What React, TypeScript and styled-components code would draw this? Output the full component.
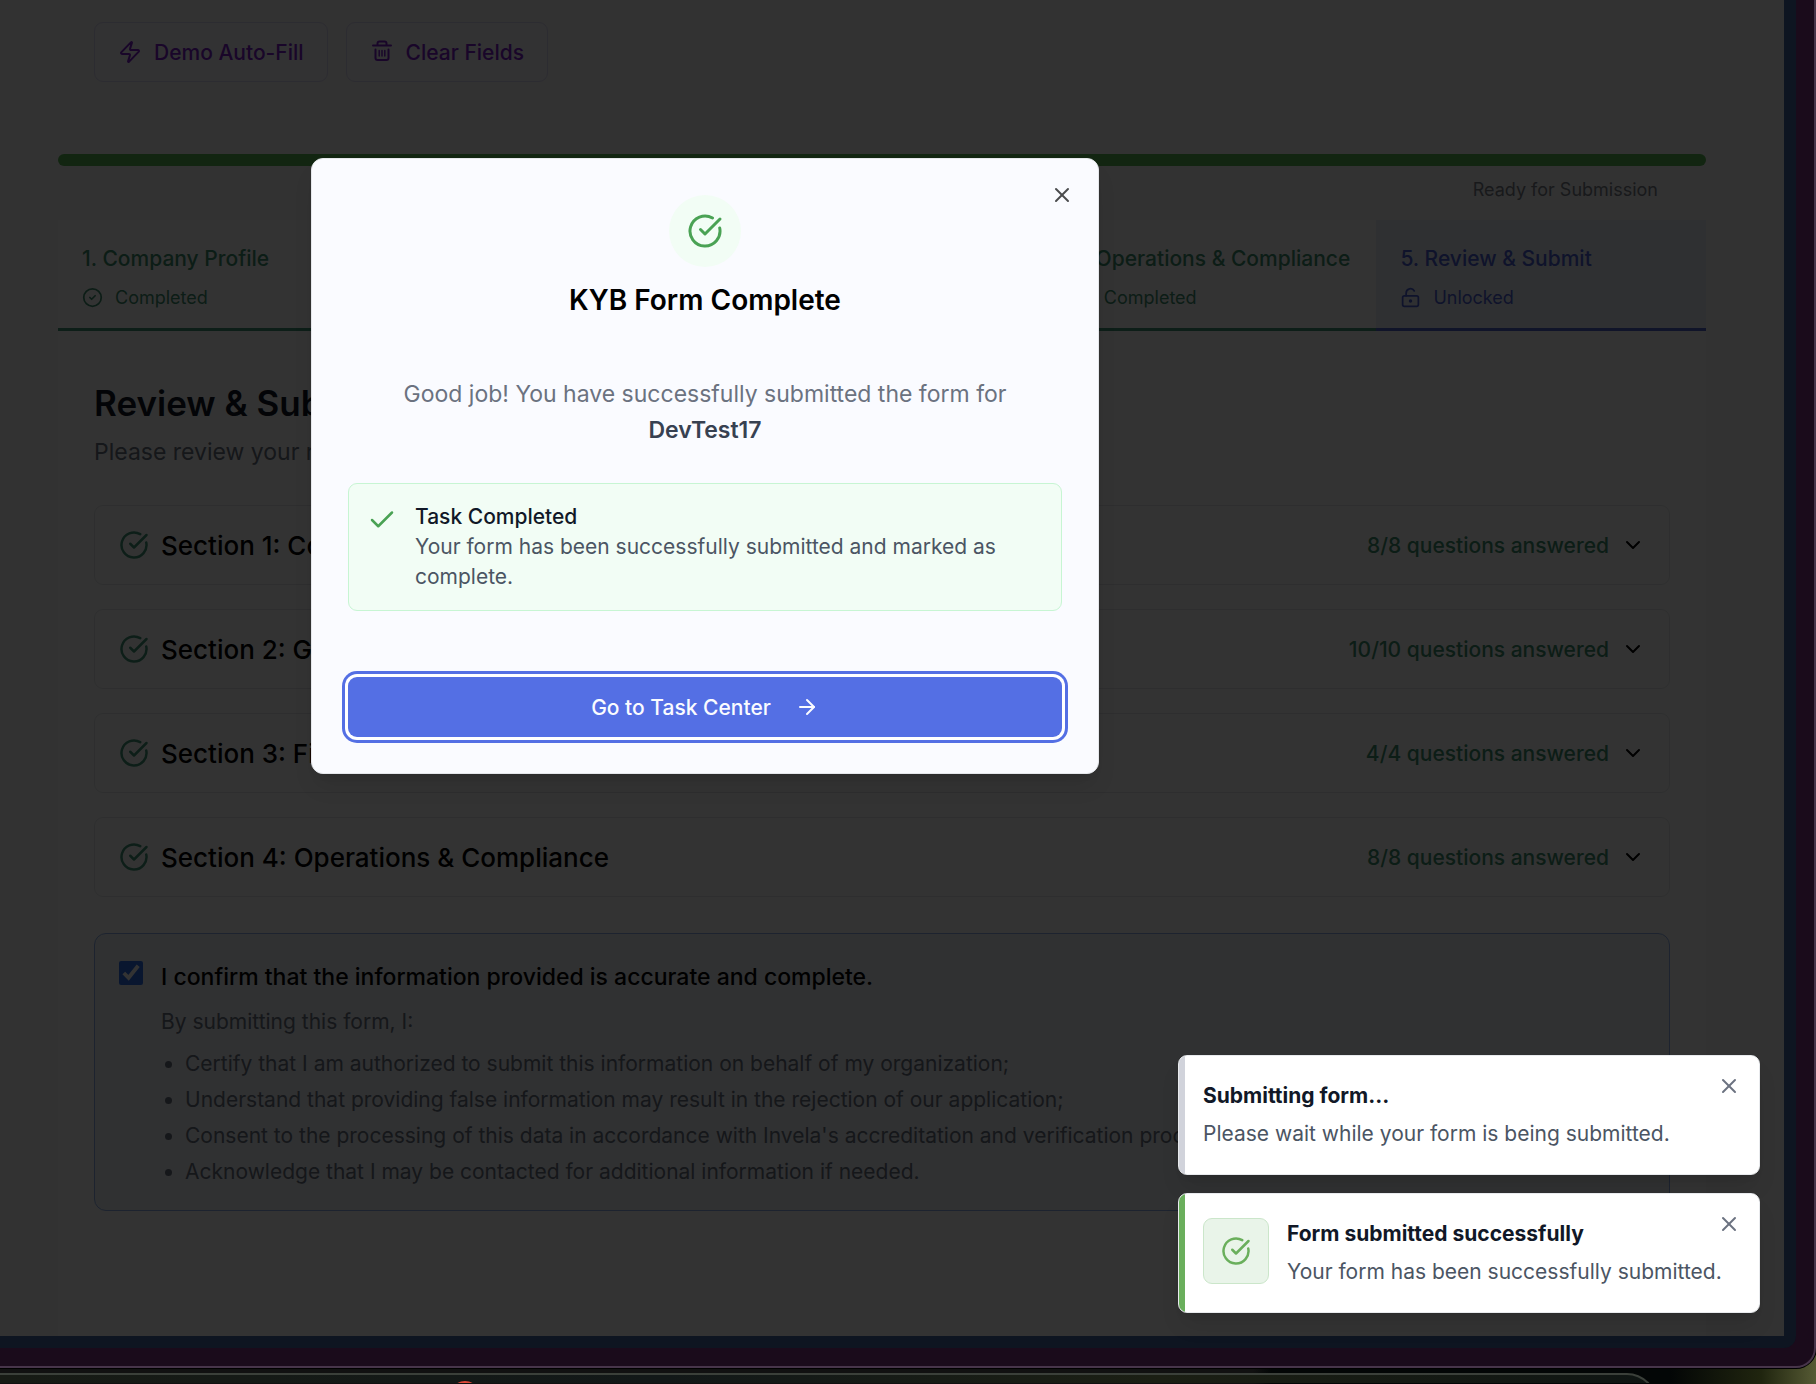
import React from "react";
import styled, { createGlobalStyle } from "styled-components";
import {
  ArrowRight,
  Check,
  ChevronDown,
  CircleCheck,
  CircleCheckBig,
  LockKeyholeOpen,
  X,
  Zap,
} from "lucide-react";

const GlobalStyle = createGlobalStyle`
  *, *::before, *::after { box-sizing: border-box; }
  body { margin: 0; background: #0b0f0c; font-family: Inter, "Liberation Sans", sans-serif; }
  h1, h2, h3, p, ul { margin: 0; padding: 0; }
  button { font-family: inherit; cursor: pointer; }
  svg { display: block; flex-shrink: 0; }
`;

const Desktop = styled.div`
  min-height: 100vh;
  display: flex;
  flex-direction: column;
  overflow: hidden;
  background: linear-gradient(90deg, #111111 0 69%, #030606 70% 92%, #20250f 97%, #565a34);
`;

const BrowserWindow = styled.div`
  padding: 0 18px 18px 0;
  background: #1a0b1b;
  border: solid #47354a;
  border-width: 0 2px 2px 0;
  border-bottom-right-radius: 20px;
  box-shadow: 0 0 0 1px #000000;
`;

const Viewport = styled.div`
  padding: 0 12px 12px 0;
  background: #0e1521;
  border-bottom-right-radius: 12px;
`;

const Page = styled.main`
  position: relative;
  padding: 22px 78px 0 58px;
  background: #f9fafb;
`;

const Toolbar = styled.div`
  display: flex;
  gap: 18px;
  padding-left: 36px;
  margin-bottom: 72px;
`;

const ToolButton = styled.button`
  display: flex;
  align-items: center;
  gap: 12px;
  height: 60px;
  padding: 0 23px;
  border: 1px solid #dcd9f2;
  border-radius: 9px;
  background: #f9f7ff;
  color: #7e22ce;
  font-size: 21px;
  font-weight: 500;
`;

const Progress = styled.div`
  height: 12px;
  border-radius: 6px;
  background: #5ab955;
`;

const ProgressNote = styled.p`
  padding: 12px 48px 18px 0;
  text-align: right;
  font-size: 18px;
  line-height: 24px;
  color: #7b7f88;
`;

const Panel = styled.section`
  background: #ffffff;
  padding-bottom: 125px;
`;

const Tabs = styled.nav`
  display: grid;
  grid-template-columns: repeat(5, 1fr);
`;

const Tab = styled.button<{ $active?: boolean }>`
  display: flex;
  flex-direction: column;
  gap: 12px;
  padding: 25px 0 17px 24px;
  border: 0;
  border-bottom: 3px solid ${(p) => (p.$active ? "#5066cc" : "#42977a")};
  background: ${(p) => (p.$active ? "#eaf1f9" : "#ffffff")};
  color: ${(p) => (p.$active ? "#4a5fd6" : "#3f8f70")};
  text-align: left;
  white-space: nowrap;
`;

const TabTitle = styled.span`
  font-size: 21px;
  line-height: 27px;
  font-weight: 500;
`;

const TabStatus = styled.span`
  display: flex;
  align-items: center;
  gap: 12px;
  font-size: 18px;
  line-height: 27px;
`;

const PanelBody = styled.div`
  padding: 48px 36px 0;
`;

const Heading = styled.h1`
  font-size: 35px;
  line-height: 48px;
  font-weight: 600;
  color: #111827;
`;

const Lead = styled.p`
  margin: 7px 0 35px;
  font-size: 23px;
  line-height: 36px;
  color: #6b7280;
`;

const SectionList = styled.div`
  display: flex;
  flex-direction: column;
  gap: 24px;
  margin-bottom: 36px;
`;

const SectionCard = styled.button`
  display: flex;
  align-items: center;
  gap: 12px;
  height: 80px;
  padding: 0 24px;
  border: 1px solid #e5e7eb;
  border-radius: 9px;
  background: #ffffff;
  color: #000000;
  text-align: left;
`;

const SectionName = styled.span`
  flex: 1;
  font-size: 26px;
  font-weight: 500;
`;

const Answered = styled.span`
  font-size: 21px;
  font-weight: 500;
  color: #3f8f70;
`;

const ConfirmBox = styled.div`
  display: flex;
  gap: 18px;
  padding: 25px 24px 23px;
  border: 1px solid #8fb0e8;
  border-radius: 12px;
  background: #f0f4fb;
`;

const Checkbox = styled.input`
  width: 24px;
  height: 24px;
  margin: 2px 0 0;
  accent-color: #2f6fea;
`;

const ConfirmText = styled.div`
  display: flex;
  flex-direction: column;
  font-size: 21px;
  line-height: 30px;
  color: #6b7280;
`;

const ConfirmLabel = styled.label`
  margin-bottom: 12px;
  font-size: 23px;
  line-height: 36px;
  font-weight: 500;
  color: #000000;
`;

const Terms = styled.ul`
  display: flex;
  flex-direction: column;
  gap: 6px;
  margin-top: 12px;
  padding-left: 24px;
`;

const Backdrop = styled.div`
  position: absolute;
  inset: 0;
  background: rgba(0, 0, 0, 0.8);
`;

const Dialog = styled.div`
  position: absolute;
  top: 158px;
  left: 311px;
  width: 788px;
  display: flex;
  flex-direction: column;
  align-items: center;
  padding: 36px;
  border: 1px solid #e5e7eb;
  border-radius: 12px;
  background: #fafbff;
  box-shadow: 0 15px 23px -5px rgba(0, 0, 0, 0.1), 0 6px 9px -6px rgba(0, 0, 0, 0.1);
`;

const CloseButton = styled.button<{ $inset: number; $color: string }>`
  position: absolute;
  top: ${(p) => p.$inset}px;
  right: ${(p) => p.$inset}px;
  padding: 0;
  border: 0;
  background: none;
  color: ${(p) => p.$color};
`;

const Medallion = styled.div`
  display: grid;
  place-items: center;
  width: 72px;
  height: 72px;
  margin-bottom: 18px;
  border-radius: 50%;
  background: #f2fdf5;
  color: #4aa254;
`;

const DialogTitle = styled.h2`
  margin-bottom: 61px;
  font-size: 28px;
  line-height: 30px;
  font-weight: 600;
  color: #000000;
`;

const DialogText = styled.p`
  margin-bottom: 35px;
  text-align: center;
  font-size: 23px;
  line-height: 36px;
  color: #6b7280;

  strong {
    display: block;
    font-weight: 600;
    color: #374151;
  }
`;

const Notice = styled.div`
  align-self: stretch;
  display: flex;
  gap: 18px;
  padding: 18px;
  margin-bottom: 66px;
  border: 1px solid #c7f5d3;
  border-radius: 9px;
  background: #f2fdf5;
  font-size: 21px;
  line-height: 30px;
  color: #4b5563;

  svg {
    margin-top: 3px;
    color: #4aa254;
  }
`;

const NoticeTitle = styled.h3`
  font-size: 21px;
  line-height: 30px;
  font-weight: 500;
  color: #111827;
`;

const PrimaryButton = styled.button`
  align-self: stretch;
  display: flex;
  align-items: center;
  justify-content: center;
  gap: 24px;
  height: 60px;
  border: 0;
  border-radius: 9px;
  background: #546fe4;
  color: #fafbff;
  font-size: 21px;
  font-weight: 500;
  box-shadow: 0 0 0 3px #ffffff, 0 0 0 6px #546fe4;
`;

const ToastStack = styled.div`
  position: absolute;
  right: 24px;
  bottom: 23px;
  width: 582px;
  display: flex;
  flex-direction: column;
  gap: 18px;
`;

const Toast = styled.div<{ $accent: string }>`
  position: relative;
  display: flex;
  gap: 18px;
  padding: 24px;
  border: 1px solid #e8eaed;
  border-radius: 9px;
  background: linear-gradient(90deg, ${(p) => p.$accent} 6px, #ffffff 6px);
  box-shadow: 0 15px 23px -5px rgba(0, 0, 0, 0.1), 0 6px 9px -6px rgba(0, 0, 0, 0.1);
`;

const ToastBadge = styled.div`
  display: grid;
  place-items: center;
  width: 66px;
  height: 66px;
  border: 1px solid #cbe6ca;
  border-radius: 9px;
  background: #e9f4e9;
  color: #6aaf5c;
`;

const ToastTitle = styled.h3`
  margin-bottom: 6px;
  font-size: 21px;
  line-height: 32px;
  font-weight: 700;
  color: #111827;
`;

const ToastText = styled.p`
  font-size: 21px;
  line-height: 32px;
  color: #4b5563;
  white-space: nowrap;
`;

const DockArea = styled.div`
  flex: 1;
  height: 15px;
  max-height: 15px;
  overflow: hidden;
  padding: 5px 159px 0 0;
`;

const Dock = styled.div`
  height: 90px;
  padding: 6px 0 0 450px;
  border: solid #3b403a;
  border-width: 2px 2px 0 0;
  border-top-right-radius: 30px;
  background: linear-gradient(90deg, #171b15, #121818 40%, #1b1f14 70%, #0f1513);
`;

const DockBadge = styled.div`
  width: 30px;
  height: 30px;
  border-radius: 50%;
  background: #e0493a;
`;

const TrashIcon = () => (
  <svg
    width="24"
    height="24"
    viewBox="0 0 24 24"
    fill="none"
    stroke="currentColor"
    strokeWidth="2"
    strokeLinecap="round"
    strokeLinejoin="round"
  >
    <path d="M3 5.5h18" />
    <path d="M7.5 5V3.5a2 2 0 0 1 2-2h5a2 2 0 0 1 2 2V5" />
    <path d="M5.5 9.5V18a2 2 0 0 0 2 2h9a2 2 0 0 0 2-2V9.5" />
    <path strokeWidth="1.5" d="M9.2 10.5v5.5M12 10.5v5.5M14.8 10.5v5.5" />
  </svg>
);

const steps = [
  "1. Company Profile",
  "2. Governance",
  "3. Financial Profile",
  "4. Operations & Compliance",
];

const sections = [
  { name: "Section 1: Company Profile", count: "8/8" },
  { name: "Section 2: Governance", count: "10/10" },
  { name: "Section 3: Financial Profile", count: "4/4" },
  { name: "Section 4: Operations & Compliance", count: "8/8" },
];

const terms = [
  "Certify that I am authorized to submit this information on behalf of my organization;",
  "Understand that providing false information may result in the rejection of our application;",
  "Consent to the processing of this data in accordance with Invela's accreditation and verification procedures;",
  "Acknowledge that I may be contacted for additional information if needed.",
];

export default function App() {
  return (
    <Desktop>
      <GlobalStyle />
      <BrowserWindow>
        <Viewport>
          <Page>
            <Toolbar>
              <ToolButton type="button">
                <Zap size={24} />
                Demo Auto-Fill
              </ToolButton>
              <ToolButton type="button">
                <TrashIcon />
                Clear Fields
              </ToolButton>
            </Toolbar>
            <Progress role="progressbar" aria-label="Form progress" aria-valuenow={100} />
            <ProgressNote>Ready for Submission</ProgressNote>
            <Panel>
              <Tabs>
                {steps.map((step) => (
                  <Tab type="button" key={step}>
                    <TabTitle>{step}</TabTitle>
                    <TabStatus>
                      <CircleCheck size={21} />
                      Completed
                    </TabStatus>
                  </Tab>
                ))}
                <Tab type="button" $active>
                  <TabTitle>5. Review &amp; Submit</TabTitle>
                  <TabStatus>
                    <LockKeyholeOpen size={21} />
                    Unlocked
                  </TabStatus>
                </Tab>
              </Tabs>
              <PanelBody>
                <Heading>Review &amp; Submit</Heading>
                <Lead>Please review your responses before submitting</Lead>
                <SectionList>
                  {sections.map((section) => (
                    <SectionCard type="button" key={section.name}>
                      <CircleCheckBig size={30} color="#42977a" />
                      <SectionName>{section.name}</SectionName>
                      <Answered>{section.count} questions answered</Answered>
                      <ChevronDown size={24} />
                    </SectionCard>
                  ))}
                </SectionList>
                <ConfirmBox>
                  <Checkbox id="confirm" type="checkbox" defaultChecked />
                  <ConfirmText>
                    <ConfirmLabel htmlFor="confirm">
                      I confirm that the information provided is accurate and complete.
                    </ConfirmLabel>
                    <p>By submitting this form, I:</p>
                    <Terms>
                      {terms.map((term) => (
                        <li key={term}>{term}</li>
                      ))}
                    </Terms>
                  </ConfirmText>
                </ConfirmBox>
              </PanelBody>
            </Panel>

            <Backdrop />

            <Dialog role="dialog" aria-labelledby="dialog-title">
              <CloseButton type="button" aria-label="Close" $inset={24} $color="#4a4b4d">
                <X size={24} />
              </CloseButton>
              <Medallion>
                <CircleCheckBig size={36} />
              </Medallion>
              <DialogTitle id="dialog-title">KYB Form Complete</DialogTitle>
              <DialogText>
                Good job! You have successfully submitted the form for
                <strong>DevTest17</strong>
              </DialogText>
              <Notice>
                <Check size={30} />
                <div>
                  <NoticeTitle>Task Completed</NoticeTitle>
                  <p>Your form has been successfully submitted and marked as complete.</p>
                </div>
              </Notice>
              <PrimaryButton type="button">
                Go to Task Center
                <ArrowRight size={24} />
              </PrimaryButton>
            </Dialog>

            <ToastStack>
              <Toast role="status" $accent="#d1d3db">
                <div>
                  <ToastTitle>Submitting form…</ToastTitle>
                  <ToastText>Please wait while your form is being submitted.</ToastText>
                </div>
                <CloseButton type="button" aria-label="Dismiss" $inset={18} $color="#6b7280">
                  <X size={24} />
                </CloseButton>
              </Toast>
              <Toast role="status" $accent="#6aaf5c">
                <ToastBadge>
                  <CircleCheckBig size={30} />
                </ToastBadge>
                <div>
                  <ToastTitle>Form submitted successfully</ToastTitle>
                  <ToastText>Your form has been successfully submitted.</ToastText>
                </div>
                <CloseButton type="button" aria-label="Dismiss" $inset={18} $color="#6b7280">
                  <X size={24} />
                </CloseButton>
              </Toast>
            </ToastStack>
          </Page>
        </Viewport>
      </BrowserWindow>
      <DockArea>
        <Dock>
          <DockBadge />
        </Dock>
      </DockArea>
    </Desktop>
  );
}
